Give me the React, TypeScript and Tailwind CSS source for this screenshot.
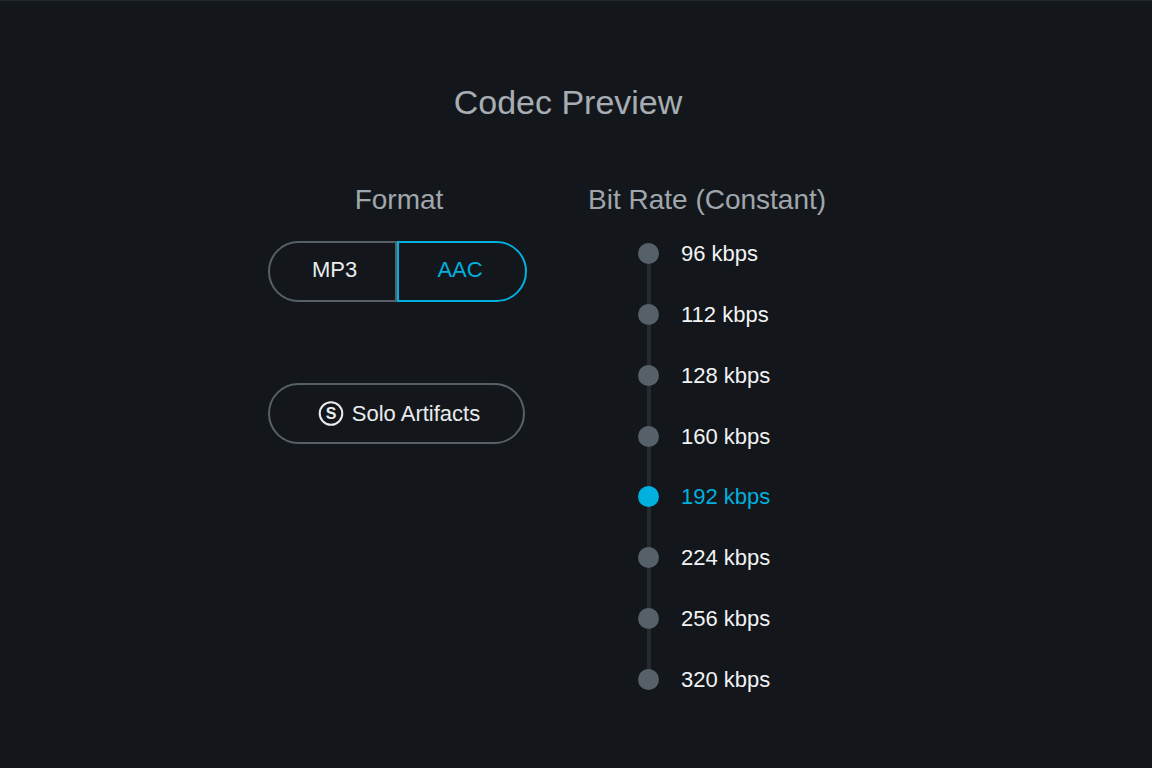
import { useState } from "react"
import clsx from "clsx"

const formats = ["MP3", "AAC"]
const bitRates = [96, 112, 128, 160, 192, 224, 256, 320]

function SoloIcon() {
  return (
    <svg viewBox="0 0 26 26" className="w-[26px] h-[26px] shrink-0" aria-hidden="true">
      <circle cx="13" cy="12.5" r="11.3" fill="none" stroke="currentColor" strokeWidth="2" />
      <text x="13" y="18" textAnchor="middle" fontSize="16" fontWeight="700" fill="currentColor">
        S
      </text>
    </svg>
  )
}

interface FormatToggleProps {
  value: string
  onChange: (format: string) => void
}

function FormatToggle({ value, onChange }: FormatToggleProps) {
  return (
    <div className="flex w-[259px] h-[61px]" role="group" aria-labelledby="format-title">
      {formats.map((format, i) => (
        <button
          key={format}
          type="button"
          aria-pressed={value === format}
          onClick={() => onChange(format)}
          className={clsx(
            "border-2 pb-[3px] text-[22px] leading-7",
            i === 0 ? "w-[129px] rounded-l-full pl-1" : "flex-1 rounded-r-full pr-1",
            value === format ? "border-[#00b0de] text-[#00b0de]" : "border-[#566067] text-[#e9ebec]",
          )}
        >
          {format}
        </button>
      ))}
    </div>
  )
}

interface BitRateListProps {
  value: number
  onChange: (rate: number) => void
}

function BitRateList({ value, onChange }: BitRateListProps) {
  return (
    <div className="relative ml-[50px] flex h-[447px] flex-col justify-between" role="radiogroup" aria-labelledby="rate-title">
      {/* Track behind the dots */}
      <div className="absolute left-[9px] inset-y-2 w-1 bg-[#242b30]" />
      {bitRates.map((rate) => (
        <label
          key={rate}
          className={clsx(
            "relative flex h-[21px] w-fit cursor-pointer items-center gap-[22px] text-[22px] leading-[29px]",
            value === rate ? "text-[#00b0de]" : "text-[#f1f3f4]",
          )}
        >
          <input
            type="radio"
            name="bit-rate"
            checked={value === rate}
            onChange={() => onChange(rate)}
            className="size-[21px] shrink-0 cursor-pointer appearance-none rounded-full bg-[#566069] checked:bg-[#00b0de]"
          />
          {rate} kbps
        </label>
      ))}
    </div>
  )
}

export default function App() {
  const [format, setFormat] = useState("AAC")
  const [bitRate, setBitRate] = useState(192)
  const [solo, setSolo] = useState(false)

  return (
    <main className="min-h-screen border-t border-[#22282c] bg-[#13171b] pt-[81px] pr-4 font-['Liberation_Sans',Arial,sans-serif]">
      <div className="mx-auto max-w-[600px]">
        <h1 className="text-center text-[34px] leading-10 text-[#a7adb3]">Codec Preview</h1>

        <div className="mt-[60px] flex gap-[58px]">
          <section className="w-[262px] shrink-0">
            <h2 id="format-title" className="text-center text-[28px] leading-9 text-[#a0a6ac]">Format</h2>
            <div className="mt-[23px]">
              <FormatToggle value={format} onChange={setFormat} />
            </div>
            <button
              type="button"
              aria-pressed={solo}
              onClick={() => setSolo(!solo)}
              className="mt-[81px] flex h-[61px] w-[257px] items-center justify-center gap-2 rounded-full border-2 border-[#566067] pl-[5px] text-[22px] leading-7 text-[#e9ebec]"
            >
              <SoloIcon />
              Solo Artifacts
            </button>
          </section>

          <section className="flex-1">
            <h2 id="rate-title" className="text-[28px] leading-9 whitespace-nowrap text-[#a0a6ac]">Bit Rate (Constant)</h2>
            <div className="mt-[25px]">
              <BitRateList value={bitRate} onChange={setBitRate} />
            </div>
          </section>
        </div>
      </div>
    </main>
  )
}
